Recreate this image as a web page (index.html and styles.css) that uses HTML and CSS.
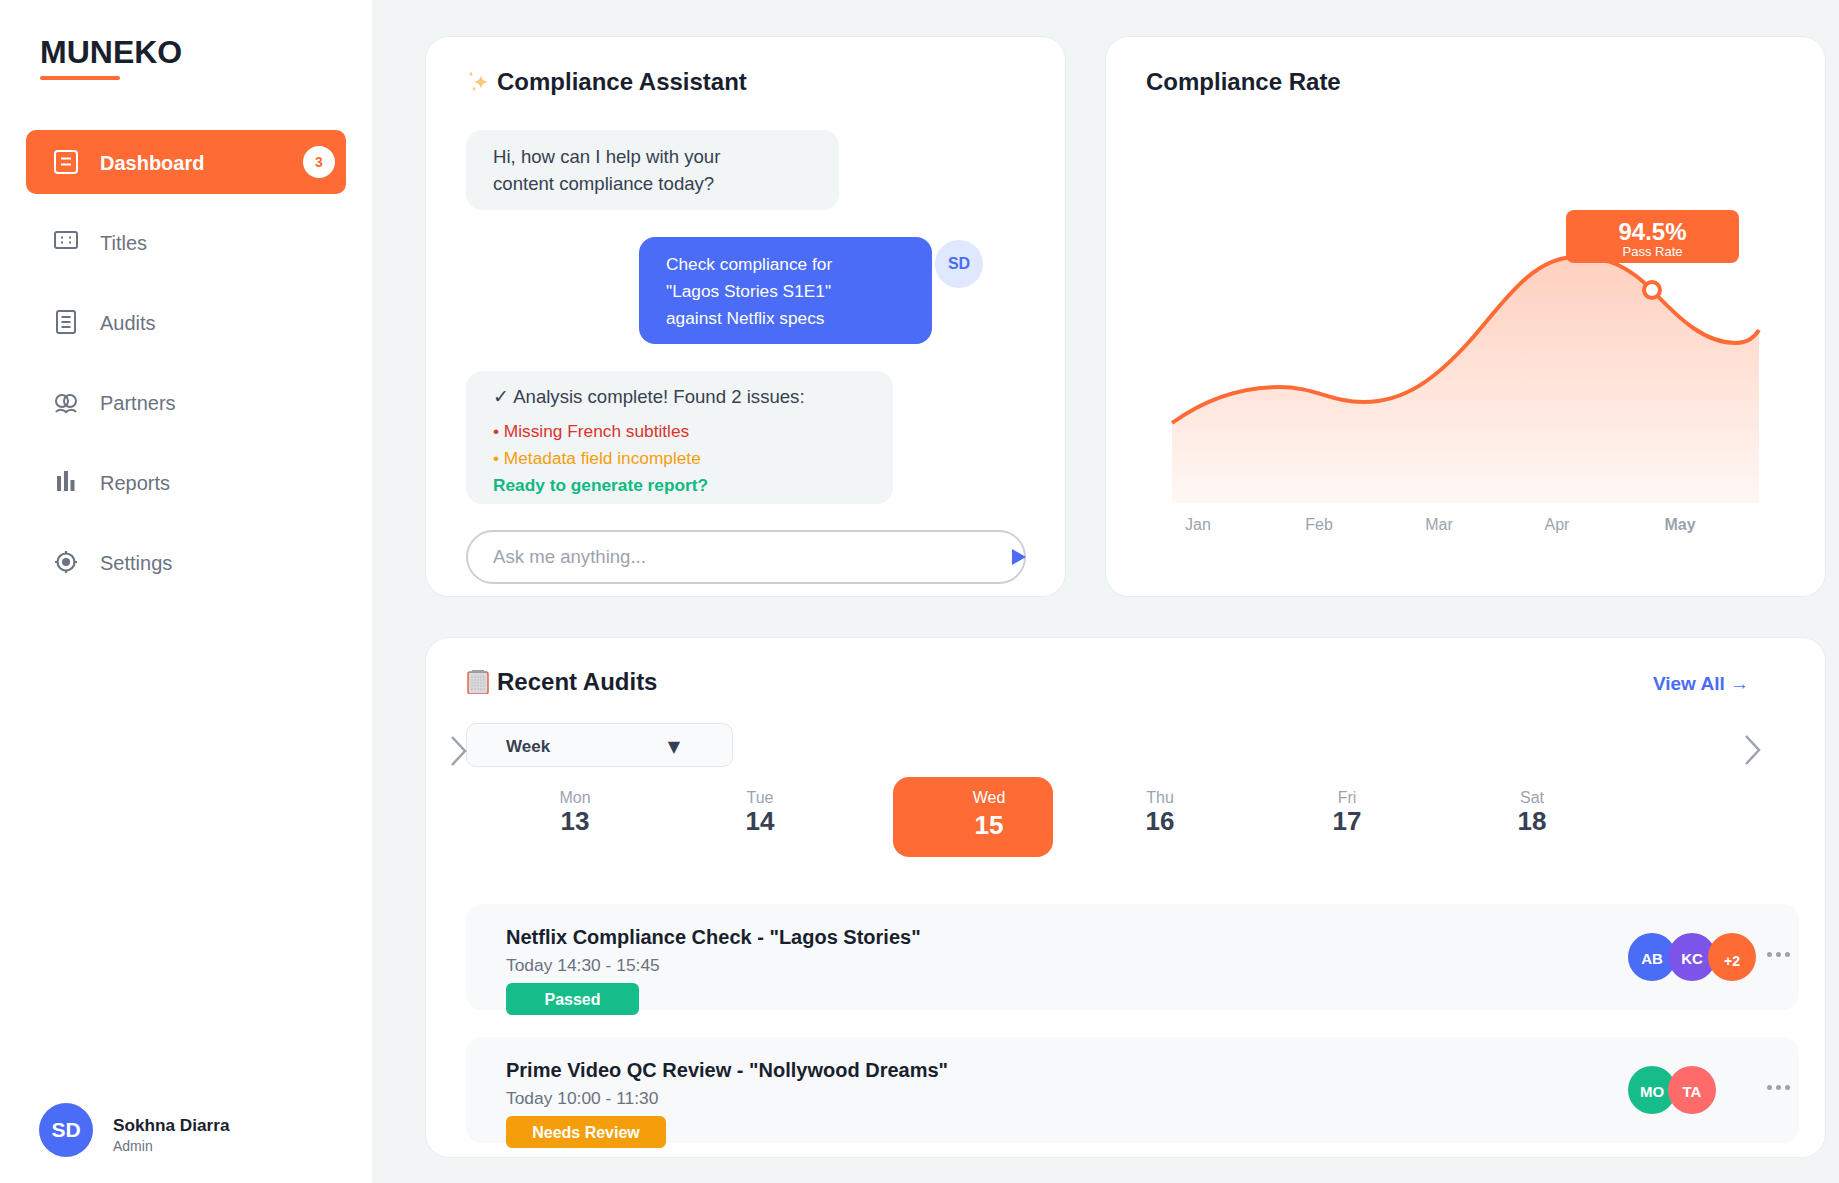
FILE: index.html
```html
<!DOCTYPE html>
<html lang="en">
<head>
  <meta charset="UTF-8">
  <meta name="viewport" content="width=device-width, initial-scale=1.0">
  <title>Muneko Dashboard</title>
  <link rel="stylesheet" href="styles.css">
</head>
<body>

<div class="app">
  <aside class="sidebar">
    <div class="logo">MUNEKO</div>

    <nav class="nav">
      <a class="nav-item active" href="#">
        <svg class="nav-icon" viewBox="0 0 24 24" fill="none" stroke="currentColor" stroke-width="2">
          <rect x="1" y="1" width="22" height="22" rx="3"/>
          <path d="M7 8.5h10M7 14.5h10"/>
        </svg>
        Dashboard
        <span class="nav-badge">3</span>
      </a>
      <a class="nav-item" href="#">
        <svg class="nav-icon" viewBox="0 0 24 24" fill="none" stroke="currentColor" stroke-width="2">
          <rect x="1" y="2" width="22" height="16" rx="2"/>
          <path d="M7 7.5h2M15 7.5h2M7 12.5h2M15 12.5h2"/>
        </svg>
        Titles
      </a>
      <a class="nav-item" href="#">
        <svg class="nav-icon" viewBox="0 0 24 24" fill="none" stroke="currentColor" stroke-width="2">
          <rect x="3" y="1" width="18" height="22" rx="2"/>
          <path d="M7.5 7h9M7.5 12h9M7.5 17h9"/>
        </svg>
        Audits
      </a>
      <a class="nav-item" href="#">
        <svg class="nav-icon" viewBox="0 0 24 24" fill="none" stroke="currentColor" stroke-width="2">
          <circle cx="8" cy="11" r="6"/>
          <circle cx="16" cy="11" r="6"/>
          <path d="M2 22c2-3 7-3 10 0 3-3 8-3 10 0"/>
        </svg>
        Partners
      </a>
      <a class="nav-item" href="#">
        <svg class="nav-icon" viewBox="0 0 24 24" fill="currentColor">
          <rect x="3" y="6" width="4" height="15"/>
          <rect x="10" y="1" width="4" height="20"/>
          <rect x="16.500" y="10" width="4" height="11"/>
        </svg>
        Reports
      </a>
      <a class="nav-item" href="#">
        <svg class="nav-icon" viewBox="0 0 24 24" fill="none" stroke="currentColor" stroke-width="2.200">
          <circle cx="12" cy="12" r="8.500"/>
          <circle cx="12" cy="12" r="4" fill="currentColor" stroke="none"/>
          <path d="M12 1v2.500M12 20.500V23M1 12h2.500M20.500 12H23"/>
        </svg>
        Settings
      </a>
    </nav>

    <div class="user">
      <div class="user-avatar">SD</div>
      <div class="user-info">
        <div class="user-name">Sokhna Diarra</div>
        <div class="user-role">Admin</div>
      </div>
    </div>
  </aside>

  <main class="main">
    <section class="card assistant">
      <h2 class="card-title">
        <svg class="title-icon" viewBox="0 0 24 24" fill="#fbc77d">
          <path d="M15 5c.8 4.300 2.200 6 7 7-4.800 1-6.200 2.700-7 7-.8-4.300-2.200-6-7-7 4.800-1 6.200-2.700 7-7z"/>
          <path d="M5 1c.3 2 1 2.700 2.500 3C6 4.300 5.300 5 5 7c-.3-2-1-2.700-2.500-3C4 3.700 4.700 3 5 1z"/>
          <path d="M8 16c.3 2 .8 2.600 2 3-1.200.4-1.700 1-2 3-.3-2-.8-2.600-2-3 1.200-.4 1.700-1 2-3z"/>
        </svg>
        Compliance Assistant
      </h2>

      <div class="chat">
        <div class="bubble bubble-bot first">Hi, how can I help with your<br>content compliance today?</div>

        <div class="user-msg">
          <div class="bubble bubble-user">Check compliance for<br>"Lagos Stories S1E1"<br>against Netflix specs</div>
          <div class="msg-avatar">SD</div>
        </div>

        <div class="bubble bubble-bot result">
          <div class="result-head">✓ Analysis complete! Found 2 issues:</div>
          <div class="issue red">• Missing French subtitles</div>
          <div class="issue orange">• Metadata field incomplete</div>
          <div class="issue green">Ready to generate report?</div>
        </div>
      </div>

      <div class="chat-input">
        <input type="text" placeholder="Ask me anything...">
        <span class="send"></span>
      </div>
    </section>

    <section class="card rate">
      <h2 class="card-title">Compliance Rate</h2>
      <div class="chart">
        <svg class="chart-svg" viewBox="1160 200 610 340" width="610" height="340">
          <defs>
            <linearGradient id="areaFill" x1="0" y1="0" x2="0" y2="1">
              <stop offset="0" stop-color="#ff6b35" stop-opacity="0.32"/>
              <stop offset="1" stop-color="#ff6b35" stop-opacity="0.05"/>
            </linearGradient>
          </defs>
          <path d="M1172 423C1205 399 1240 387 1279 387C1315 387 1330 402 1364 402C1405 402 1436 378 1468 343C1500 308 1530 257 1576 257C1610 257 1630 268 1652 290C1680 320 1705 343 1736 343C1747 343 1754 338 1759 330V503H1172Z" fill="url(#areaFill)"/>
          <path d="M1172 423C1205 399 1240 387 1279 387C1315 387 1330 402 1364 402C1405 402 1436 378 1468 343C1500 308 1530 257 1576 257C1610 257 1630 268 1652 290C1680 320 1705 343 1736 343C1747 343 1754 338 1759 330" fill="none" stroke="#ff6b35" stroke-width="4"/>
          <circle cx="1652" cy="290" r="8" fill="#fff" stroke="#ff6b35" stroke-width="4"/>
          <g class="chart-labels" text-anchor="middle">
            <text x="1198" y="530">Jan</text>
            <text x="1319" y="530">Feb</text>
            <text x="1439" y="530">Mar</text>
            <text x="1557" y="530">Apr</text>
            <text x="1680" y="530" class="current">May</text>
          </g>
        </svg>
        <div class="chart-tip">
          <div class="tip-value">94.5%</div>
          <div class="tip-label">Pass Rate</div>
        </div>
      </div>
    </section>

    <section class="card audits">
      <div class="audits-head">
        <h2 class="card-title">
          <svg class="title-icon" viewBox="0 0 24 24">
            <rect x="2" y="2" width="20" height="22" rx="2" fill="#d8dadd" stroke="#e4684a" stroke-width="1.500"/>
            <rect x="6" y="0" width="12" height="3" fill="#9aa0a8"/>
            <path d="M5 7h14M5 10h14M5 13h14M5 16h14M5 19h14" stroke="#b9bdc3" stroke-width="1" stroke-dasharray="2 1"/>
          </svg>
          Recent Audits
        </h2>
        <a class="view-all" href="#">View All →</a>
      </div>

      <div class="calendar">
        <svg class="chevron chevron-left" viewBox="0 0 16 30" fill="none" stroke="#9ca3af" stroke-width="2.500"><path d="M1 1l13 14L1 29"/></svg>
        <svg class="chevron chevron-right" viewBox="0 0 16 30" fill="none" stroke="#9ca3af" stroke-width="2.500"><path d="M1 1l13 14L1 29"/></svg>

        <div class="week-select">
          <span>Week</span>
          <span class="week-arrow">▼</span>
        </div>

        <div class="days">
          <div class="day"><span class="day-name">Mon</span><span class="day-num">13</span></div>
          <div class="day"><span class="day-name">Tue</span><span class="day-num">14</span></div>
          <div class="day today"><span class="day-name">Wed</span><span class="day-num">15</span></div>
          <div class="day"><span class="day-name">Thu</span><span class="day-num">16</span></div>
          <div class="day"><span class="day-name">Fri</span><span class="day-num">17</span></div>
          <div class="day"><span class="day-name">Sat</span><span class="day-num">18</span></div>
        </div>
      </div>

      <div class="audit-list">
        <div class="audit-row">
          <div>
            <div class="audit-title">Netflix Compliance Check - "Lagos Stories"</div>
            <div class="audit-time">Today 14:30 - 15:45</div>
            <span class="status passed">Passed</span>
          </div>
          <div class="audit-side">
            <div class="people">
              <span class="person blue">AB</span>
              <span class="person purple">KC</span>
              <span class="person coral more">+2</span>
            </div>
            <div class="dots"><i></i><i></i><i></i></div>
          </div>
        </div>

        <div class="audit-row">
          <div>
            <div class="audit-title">Prime Video QC Review - "Nollywood Dreams"</div>
            <div class="audit-time">Today 10:00 - 11:30</div>
            <span class="status review">Needs Review</span>
          </div>
          <div class="audit-side">
            <div class="people">
              <span class="person teal">MO</span>
              <span class="person rose">TA</span>
            </div>
            <div class="dots"><i></i><i></i><i></i></div>
          </div>
        </div>
      </div>
    </section>
  </main>
</div>

</body>
</html>
```

FILE: styles.css
```css
* {
  box-sizing: border-box;
}

body {
  font-family: "Liberation Sans", Arial, sans-serif;
  margin: 0;
  padding: 0;
  background-color: #f1f5f6;
  color: #374151;
}

.app {
  display: flex;
  height: 1183px;
  overflow: hidden;
}

/* Sidebar */
.sidebar {
  width: 372px;
  flex-shrink: 0;
  background-color: #ffffff;
  padding: 34px 26px 0;
  display: flex;
  flex-direction: column;
}

.logo {
  font-size: 32px;
  font-weight: bold;
  line-height: 36px;
  color: #1a1f2e;
  margin-left: 14px;
}

.logo::after {
  content: "";
  display: block;
  width: 80px;
  height: 4px;
  background-color: #ff6b35;
  margin-top: 6px;
  border-radius: 2px;
}

.nav {
  display: flex;
  flex-direction: column;
  gap: 16px;
  margin-top: 50px;
}

.nav-item {
  display: flex;
  align-items: center;
  height: 64px;
  padding: 2px 11px 0 28px;
  border-radius: 10px;
  font-size: 20px;
  color: #6b7280;
  text-decoration: none;
}

.nav-item.active {
  background-color: #ff6b35;
  color: #ffffff;
  font-weight: bold;
}

.nav-icon {
  width: 24px;
  height: 24px;
  margin-right: 22px;
  margin-top: -2px;
  flex-shrink: 0;
}

.nav-badge {
  margin-left: auto;
  margin-top: -2px;
  width: 32px;
  height: 32px;
  border-radius: 50%;
  background-color: #ffffff;
  color: #ff6b35;
  font-size: 14px;
  display: flex;
  align-items: center;
  justify-content: center;
}

.user {
  margin-top: auto;
  margin-bottom: 26px;
  margin-left: 13px;
  display: flex;
  align-items: center;
  gap: 20px;
}

.user-avatar {
  width: 54px;
  height: 54px;
  border-radius: 50%;
  background-color: #4a6cf7;
  color: #ffffff;
  font-size: 21px;
  font-weight: bold;
  display: flex;
  align-items: center;
  justify-content: center;
}

.user-info {
  padding-top: 8px;
}

.user-name {
  font-size: 17.200px;
  font-weight: bold;
  color: #1a1f2e;
  line-height: 22px;
}

.user-role {
  font-size: 14px;
  color: #6b7280;
  line-height: 18px;
  margin-top: 1px;
}

/* Main area */
.main {
  flex: 1;
  padding: 36px 13px 0 53px;
  display: grid;
  grid-template-columns: 641px 721px;
  grid-template-rows: 561px 521px;
  column-gap: 39px;
  row-gap: 40px;
}

.card {
  background-color: #ffffff;
  border: 1px solid #e8eeef;
  border-radius: 24px;
}

.card-title {
  display: flex;
  align-items: center;
  gap: 7px;
  margin: 0;
  font-size: 24px;
  line-height: 28px;
  font-weight: bold;
  color: #1a1f2e;
}

.title-icon {
  width: 24px;
  height: 24px;
  flex-shrink: 0;
}

/* Assistant */
.assistant {
  padding: 31px 39px 0 40px;
}

.chat {
  margin-top: 34px;
  display: flex;
  flex-direction: column;
  gap: 27px;
}

.bubble {
  font-size: 18.600px;
  line-height: 26.700px;
  padding: 14px 27px 13px;
  border-radius: 16px;
}

.bubble-bot {
  background-color: #f1f5f6;
}

.bubble-bot.first {
  width: 373px;
}

.user-msg {
  display: flex;
  margin-left: 173px;
  gap: 3px;
}

.bubble-user {
  width: 293px;
  padding: 14px 27px 12px;
  font-size: 17.300px;
  background-color: #4a6cf7;
  color: #ffffff;
}

.msg-avatar {
  width: 48px;
  height: 48px;
  margin-top: 3px;
  border-radius: 50%;
  background-color: #e0e8fd;
  color: #4a6cf7;
  font-size: 16px;
  font-weight: bold;
  display: flex;
  align-items: center;
  justify-content: center;
}

.bubble-bot.result {
  width: 427px;
  height: 133px;
  padding-top: 13px;
}

.result-head {
  margin-bottom: 8px;
}

.issue {
  font-size: 17.300px;
}

.issue.red {
  color: #d9342b;
}

.issue.orange {
  color: #f59e0b;
}

.issue.green {
  color: #10b981;
  font-weight: bold;
}

.chat-input {
  position: relative;
  margin-top: 26px;
  width: 560px;
}

.chat-input input {
  width: 100%;
  height: 54px;
  border: 2px solid #ccd0d6;
  border-radius: 27px;
  padding: 1px 25px 0;
  font-family: inherit;
  font-size: 18.600px;
  color: #374151;
  background-color: #ffffff;
  outline: none;
}

.chat-input input::placeholder {
  color: #9ca3af;
}

.send {
  position: absolute;
  right: 0;
  top: 19px;
  width: 0;
  height: 0;
  border-left: 14px solid #4a6cf7;
  border-top: 8px solid transparent;
  border-bottom: 8px solid transparent;
}

/* Compliance rate chart */
.rate {
  padding: 31px 39px 0 40px;
}

.chart {
  position: relative;
  margin-top: 104px;
  margin-left: 14px;
  height: 340px;
}

.chart-svg {
  display: block;
}

.chart-labels text {
  font-family: "Liberation Sans", Arial, sans-serif;
  font-size: 16px;
  fill: #9ca3af;
}

.chart-labels text.current {
  font-weight: bold;
}

.chart-tip {
  position: absolute;
  left: 406px;
  top: 10px;
  width: 173px;
  height: 53px;
  border-radius: 8px;
  background-color: #ff6b35;
  color: #ffffff;
  text-align: center;
  padding-top: 10px;
}

.tip-value {
  font-size: 24px;
  line-height: 24px;
  font-weight: bold;
}

.tip-label {
  font-size: 13px;
  line-height: 13px;
  margin-top: 1px;
}

/* Recent audits */
.audits {
  grid-column: 1 / 3;
  padding: 30px 26px 0 40px;
}

.audits-head {
  display: flex;
  align-items: center;
  justify-content: space-between;
  padding-right: 50px;
}

.view-all {
  font-size: 19px;
  font-weight: bold;
  color: #4a6cf7;
  text-decoration: none;
  margin-top: 3px;
}

.calendar {
  position: relative;
  margin-top: 27px;
}

.chevron {
  position: absolute;
  width: 16px;
  height: 30px;
}

.chevron-left {
  left: -15px;
  top: 13px;
}

.chevron-right {
  right: 38px;
  top: 12px;
}

.week-select {
  width: 267px;
  height: 44px;
  background-color: #f8fafc;
  border: 1px solid #e2e8f0;
  border-radius: 10px;
  padding: 3px 52px 0 39px;
  display: flex;
  align-items: center;
  justify-content: space-between;
  font-size: 17px;
  font-weight: bold;
}

.week-arrow {
  font-size: 16px;
  font-weight: normal;
  font-family: "DejaVu Sans", sans-serif;
}

.days {
  display: flex;
  gap: 27px;
  margin-top: 10px;
  padding-left: 29px;
}

.day {
  width: 160px;
  height: 80px;
  padding-top: 12px;
  border-radius: 16px;
  text-align: center;
}

.day:nth-child(2) {
  margin-left: -2px;
}

.day:last-child {
  margin-left: -2px;
}

.day-name {
  display: block;
  font-size: 16px;
  line-height: 18px;
  color: #9ca3af;
}

.day-num {
  display: block;
  font-size: 26px;
  line-height: 28px;
  font-weight: bold;
}

.day.today {
  margin-left: 26px;
  padding-left: 32px;
  background-color: #ff6b35;
  color: #ffffff;
}

.today .day-name {
  color: #ffffff;
}

.today .day-num {
  margin-top: 4px;
}

.audit-list {
  margin-top: 47px;
  display: flex;
  flex-direction: column;
  gap: 27px;
}

.audit-row {
  height: 106px;
  padding: 21px 9px 0 40px;
  border-radius: 16px;
  background-color: #f7f9fb;
  display: flex;
  justify-content: space-between;
}

.audit-title {
  font-size: 20px;
  line-height: 24px;
  font-weight: bold;
  color: #1a1f2e;
}

.audit-time {
  font-size: 17.400px;
  line-height: 22px;
  margin-top: 5px;
  color: #6b7280;
}

.status {
  display: inline-block;
  margin-top: 7px;
  height: 32px;
  line-height: 34px;
  border-radius: 6px;
  color: #ffffff;
  font-size: 16px;
  font-weight: bold;
  text-align: center;
}

.status.passed {
  width: 133px;
  background-color: #16bd8a;
}

.status.review {
  width: 160px;
  background-color: #f59e0b;
}

.audit-side {
  display: flex;
  align-items: flex-start;
  padding-top: 8px;
}

.people {
  display: flex;
  width: 126px;
}

.person {
  width: 48px;
  height: 48px;
  border-radius: 50%;
  color: #ffffff;
  font-size: 15px;
  font-weight: bold;
  display: flex;
  align-items: center;
  justify-content: center;
  padding-top: 3px;
  flex-shrink: 0;
}

.person + .person {
  margin-left: -8px;
}

.person.more {
  font-size: 14px;
  padding-top: 7px;
}

.blue { background-color: #4a6cf7; }
.purple { background-color: #7c55e8; }
.coral { background-color: #ff6b35; }
.teal { background-color: #16bd8a; }
.rose { background-color: #ff6b6b; }

.dots {
  display: flex;
  gap: 4px;
  margin-left: 13px;
  margin-top: 19px;
}

.dots i {
  width: 5px;
  height: 5px;
  border-radius: 50%;
  background-color: #9ca3af;
}
```
